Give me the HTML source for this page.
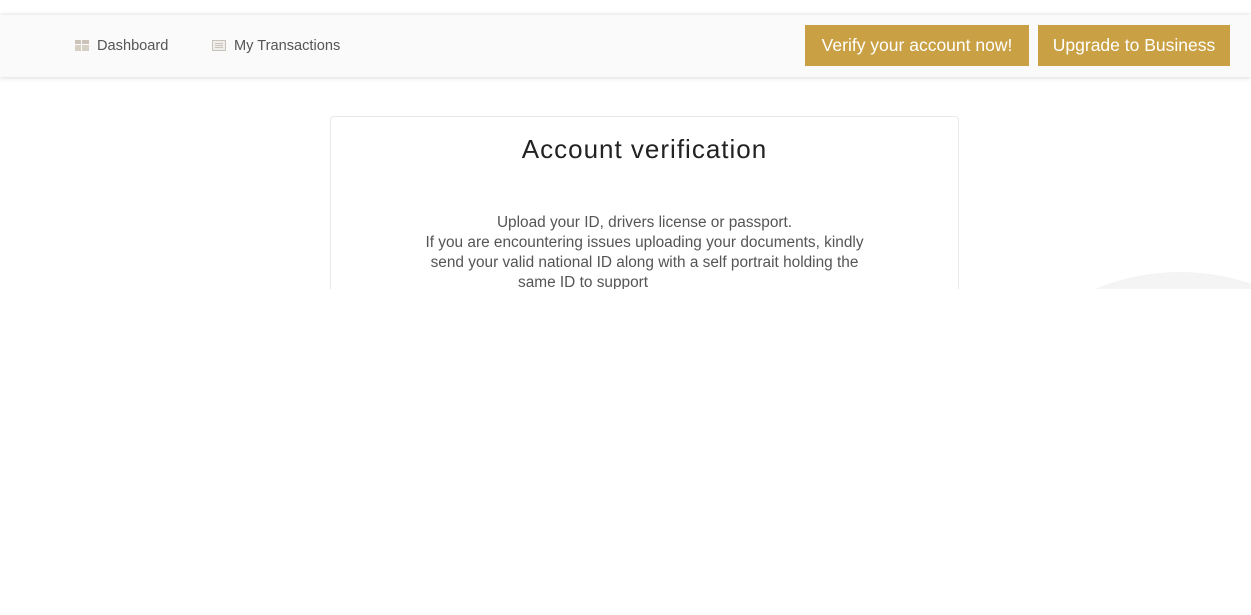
<!DOCTYPE html>
<html><head><meta charset="utf-8"><style>
html,body{margin:0;padding:0;background:#fff;width:1251px;height:615px;overflow:hidden;font-family:"Liberation Sans",sans-serif;}
.clip{position:absolute;left:0;top:0;width:1251px;height:289px;overflow:hidden;}
.nav{position:absolute;left:0;top:15px;width:1251px;height:62px;background:#fafafa;box-shadow:0 1px 5px rgba(0,0,0,0.12),0 -1px 4px rgba(0,0,0,0.06);}
.item{position:absolute;top:23px;font-size:14.6px;color:#555;}
.btn{position:absolute;top:10px;height:41px;background:#c9a043;color:#fff;font-size:17.5px;line-height:41px;text-align:center;}
.card{position:absolute;left:330px;top:116px;width:627px;height:175px;border:1px solid #e8e8e8;border-radius:4px;background:#fff;}
h1{position:absolute;left:0;width:627px;top:17px;margin:0;text-align:center;font-weight:normal;font-size:26px;color:#222;letter-spacing:1px;}
.txt{position:absolute;left:0;width:627px;top:96px;text-align:center;font-size:15.4px;line-height:20px;color:#555;white-space:nowrap;}
</style></head><body>
<div class="clip">
<svg style="position:absolute;left:1000px;top:272px" width="251" height="17"><circle cx="180" cy="221" r="221" fill="#f4f4f4"/></svg>
<div class="nav">
 <svg style="position:absolute;left:75px;top:25px" width="14" height="11"><rect x="0" y="0" width="6" height="4" fill="#cbc3b7"/><rect x="7" y="0" width="7" height="4" fill="#cbc3b7"/><rect x="0" y="5" width="6" height="6" fill="#d6cfc4"/><rect x="7" y="5" width="7" height="6" fill="#d6cfc4"/></svg>
 <div class="item" style="left:97px">Dashboard</div>
 <svg style="position:absolute;left:212px;top:25px" width="14" height="11"><rect x="0.5" y="0.5" width="13" height="10" fill="#eee" stroke="#cbc3b7"/><line x1="3" y1="3.5" x2="11" y2="3.5" stroke="#cbc3b7"/><line x1="3" y1="5.5" x2="11" y2="5.5" stroke="#cbc3b7"/><line x1="3" y1="7.5" x2="11" y2="7.5" stroke="#cbc3b7"/></svg>
 <div class="item" style="left:234px">My Transactions</div>
 <div class="btn" style="left:805px;width:224px">Verify your account now!</div>
 <div class="btn" style="left:1038px;width:192px">Upgrade to Business</div>
</div>
<div class="card">
 <h1>Account verification</h1>
 <div class="txt">Upload your ID, drivers license or passport.<br>If you are encountering issues uploading your documents, kindly<br>send your valid national ID along with a self portrait holding the<br><span style="position:absolute;left:187px">same ID to support</span></div>
</div>
</div>
</body></html>
